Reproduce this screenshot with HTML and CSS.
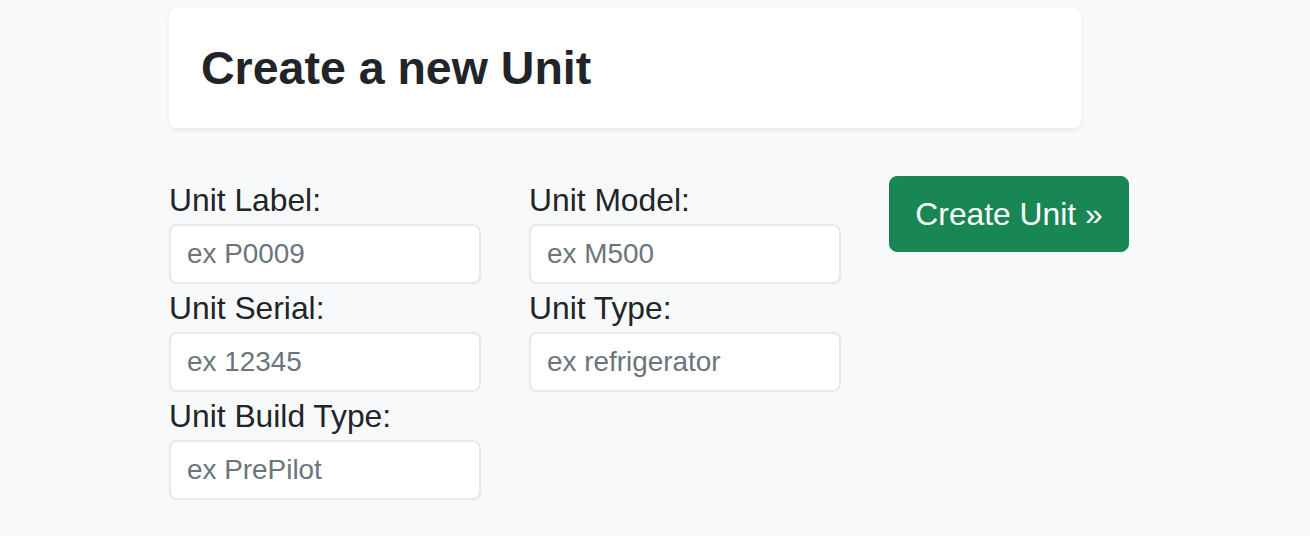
FILE: index.html
```html
<!DOCTYPE html>
<html lang="en">
<head>
<meta charset="utf-8">
<title>Create a new Unit</title>
<link rel="stylesheet" href="styles.css">
</head>
<body>
<main class="page">
  <div class="card">
    <h1 class="title">Create a new Unit</h1>
  </div>
  <form class="form">
    <div class="col">
      <label class="label" for="label">Unit Label:</label>
      <input class="input" id="label" type="text" placeholder="ex P0009">
      <label class="label" for="serial">Unit Serial:</label>
      <input class="input" id="serial" type="text" placeholder="ex 12345">
      <label class="label" for="build">Unit Build Type:</label>
      <input class="input" id="build" type="text" placeholder="ex PrePilot">
    </div>
    <div class="col">
      <label class="label" for="model">Unit Model:</label>
      <input class="input" id="model" type="text" placeholder="ex M500">
      <label class="label" for="type">Unit Type:</label>
      <input class="input" id="type" type="text" placeholder="ex refrigerator">
    </div>
    <div class="col">
      <button class="btn" type="button">Create Unit &raquo;</button>
    </div>
  </form>
</main>
</body>
</html>
```

FILE: styles.css
```css
* { box-sizing: border-box; }

html, body {
  margin: 0;
  padding: 0;
}

body {
  background: #f8f9fa;
  color: #212529;
  font-family: "Liberation Sans", Arial, sans-serif;
}

.page {
  padding: 8px 0 0 169px;
}

.card {
  width: 912px;
  background: #ffffff;
  border-radius: 8px;
  padding: 32px;
  box-shadow: 0 2px 5px rgba(0, 0, 0, 0.075);
}

.title {
  margin: 0;
  font-size: 46.5px;
  line-height: 56px;
  font-weight: 700;
  color: #212529;
}

.form {
  margin-top: 48px;
  display: grid;
  grid-template-columns: 312px 312px 240px;
  column-gap: 48px;
  align-items: start;
}

.col {
  display: flex;
  flex-direction: column;
  align-items: flex-start;
}

.label {
  font-size: 31.8px;
  line-height: 48px;
  color: #212529;
}

.input {
  width: 312px;
  height: 60px;
  margin: 0;
  padding: 7px 16px;
  border: 2px solid #e7e8e9;
  border-radius: 8px;
  background: #ffffff;
  font-family: "Liberation Sans", Arial, sans-serif;
  font-size: 27.9px;
  line-height: 42px;
  color: #212529;
  outline: none;
}

.input::placeholder {
  color: #6c757d;
  opacity: 1;
}

.btn {
  width: 240px;
  height: 76px;
  margin: 0;
  padding: 0;
  border: 1px solid #198754;
  border-radius: 8px;
  background: #198754;
  color: #ffffff;
  font-family: "Liberation Sans", Arial, sans-serif;
  font-size: 31.8px;
  line-height: 48px;
  cursor: pointer;
}
```
